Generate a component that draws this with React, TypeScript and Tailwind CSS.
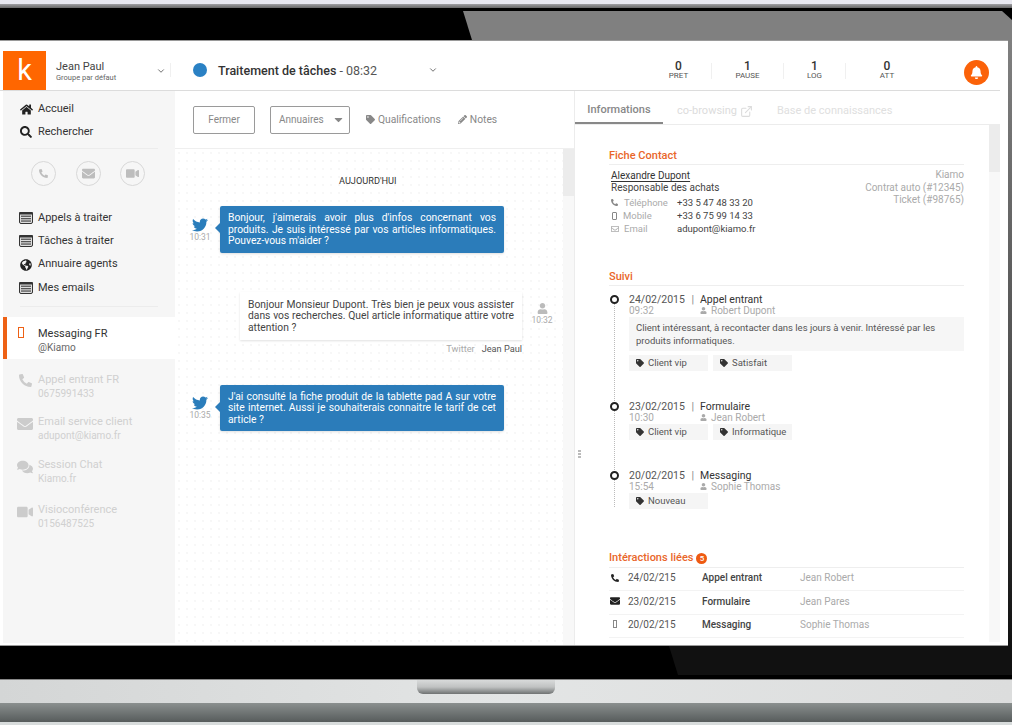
import React from "react";
import {
  FaHome, FaSearch, FaPhoneAlt, FaEnvelope, FaVideo, FaGlobeAmericas, FaTwitter, FaUser, FaTag,
  FaPencilAlt, FaBell, FaComments, FaCaretDown, FaRegEnvelope,
} from "react-icons/fa";
import { ChevronDown, ExternalLink } from "lucide-react";

function ListIcon() {
  return (
    <svg width="14" height="12" viewBox="0 0 14 12" className="text-[#333]">
      <rect x="0.5" y="0.5" width="13" height="11" rx="1.5" fill="#ddd" stroke="currentColor" />
      <rect x="0" y="0" width="14" height="2.5" rx="1" fill="currentColor" />
      <rect x="2" y="3.6" width="10" height="1.3" fill="#555" />
      <rect x="2" y="6" width="10" height="1.3" fill="#555" />
      <rect x="2" y="8.4" width="10" height="1.3" fill="#555" />
    </svg>
  );
}

function Tofu({ className }: { className: string }) {
  return <span className={"inline-block border " + className} />;
}

function NavItem({ icon, label, mt }: { icon: React.ReactNode; label: string; mt: string }) {
  return (
    <div className={"flex h-[14px] items-center pl-[14px] " + mt}>
      <span className="flex w-[18px] justify-center text-[#222]">{icon}</span>
      <span className="ml-[3px] text-[11px] text-[#333]">{label}</span>
    </div>
  );
}

function Channel({ icon, title, sub, mt }: { icon: React.ReactNode; title: string; sub: string; mt: string }) {
  return (
    <div className={"flex h-[28px] pl-[12px] text-[#d0d0d0] " + mt}>
      <span className="mt-[1px] flex w-[20px] justify-center text-[#cccccc]">{icon}</span>
      <div className="ml-[3px] text-[10.5px] leading-[14px]">
        <div className="text-[11px]">{title}</div>
        <div className="text-[10px]">{sub}</div>
      </div>
    </div>
  );
}

function Stat({ n, label, w, border }: { n: string; label: string; w: string; border?: boolean }) {
  return (
    <div className={"flex h-[16px] flex-col items-center justify-center " + w + (border ? " border-r border-[#f0f0f0]" : "")}>
      <span className="text-[12px] font-medium leading-[10px] text-[#333]">{n}</span>
      <span className="text-[8px] leading-[10px] text-[#555]">{label}</span>
    </div>
  );
}

function Bubble({ time, children, mt }: { time: string; children: React.ReactNode; mt: string }) {
  return (
    <div className={"flex items-center pl-[14px] " + mt}>
      <div className="flex w-[22px] flex-col items-center">
        <FaTwitter className="text-[16px] text-[#2a7dbb]" />
        <span className="text-[8.5px] leading-[9px] text-[#aaa]">{time}</span>
      </div>
      <div className="relative ml-[9px] w-[284px] rounded-[2px] bg-[#2b7cba] px-[8px] py-[6px] text-justify text-[10.3px] leading-[11.6px] text-white shadow-sm">
        <span className="absolute top-[17px] -left-[5px] h-0 w-0 border-y-[5px] border-r-[5px] border-y-transparent border-r-[#2b7cba]" />
        {children}
      </div>
    </div>
  );
}

function Tag({ label, w }: { label: string; w: string }) {
  return (
    <div className={"flex h-[16px] items-center bg-[#f5f5f5] pl-[7px] text-[9.5px] text-[#555] " + w}>
      <FaTag className="mr-[4px] text-[8px] text-[#333]" />
      {label}
    </div>
  );
}

function Follow({ date, time, type, who, children, h }: { date: string; time: string; type: string; who: string; children: React.ReactNode; h: string }) {
  return (
    <div className={"flex " + h}>
      <div className="mr-[9px] flex w-[11px] flex-col items-center pt-[1px]">
        <span className="h-[9px] w-[9px] shrink-0 rounded-full border-2 border-[#222]" />
        <span className="w-0 flex-1 border-l border-dotted border-[#bbb]" />
      </div>
      <div className="flex-1">
        <div className="flex h-[11px] items-center text-[10.5px]">
          <span className="w-[71px] text-[#555]">{date} <span className="ml-[4px] text-[#888]">|</span></span>
          <span className="text-[#333]">{type}</span>
        </div>
        <div className="flex h-[10px] items-center text-[10px] text-[#aaa]">
          <span className="w-[71px]">{time}</span>
          <FaUser className="mr-[4px] text-[7px]" />
          <span>{who}</span>
        </div>
        {children}
      </div>
    </div>
  );
}

function LinkRow({ icon, date, type, who }: { icon: React.ReactNode; date: string; type: string; who: string }) {
  return (
    <div className="flex h-[23.4px] items-center border-b border-[#f3f3f3] pb-[3px] text-[10px]">
      <span className="mr-[8px] flex w-[11px] justify-center text-[#222]">{icon}</span>
      <span className="w-[74px] text-[#555]">{date}</span>
      <span className="w-[98px] font-medium text-[#444]">{type}</span>
      <span className="text-[#aaa]">{who}</span>
    </div>
  );
}

export default function App() {
  return (
    <div className="flex h-[725px] w-[1012px] flex-col overflow-hidden bg-black font-['Roboto',sans-serif]">
      <div className="h-[4px] shrink-0 bg-[#e7e7ef]" />
      <div className="h-[4px] shrink-0 bg-gradient-to-b from-[#a0a0a4] to-[#666]" />
      <div className="relative h-[32px] shrink-0 bg-black">
        <div className="absolute inset-0 bg-[#808080] [clip-path:polygon(463px_3px,1002px_3px,1012px_12px,1012px_32px,472px_32px)]" />
      </div>

      <div className="flex h-[606px] shrink-0">
        <div className="flex w-[1008px] flex-col border-y border-[#9a9a9a] bg-white">
          {/* header */}
          <div className="mr-[8px] flex h-[50px] shrink-0 items-end border-b border-[#dcdcdc]">
            <div className="ml-[3px] flex h-[39px] w-[43px] items-center justify-center bg-[#ff6600] text-[29px] leading-none text-white">k</div>
            <div className="ml-[10px] flex w-[100px] flex-col self-center pt-[11px]">
              <span className="text-[11px] leading-[13px] text-[#444]">Jean Paul</span>
              <span className="text-[7.5px] leading-[10px] text-[#666]">Groupe par défaut</span>
            </div>
            <ChevronDown className="mb-[14px] h-[10px] w-[10px] text-[#555]" strokeWidth={2} />
            <span className="mb-[13px] ml-[4px] h-[14px] w-0 border-l border-[#f0f0f0]" />
            <span className="mb-[13px] ml-[22px] h-[14px] w-[14px] rounded-full bg-[#2a81c4]" />
            <div className="mb-[12px] ml-[11px] w-[210px] text-[12.5px] leading-[15px] text-[#555]">
              <span className="font-medium text-[#333]">Traitement de tâches</span> - 08:32
            </div>
            <ChevronDown className="mb-[15px] h-[10px] w-[10px] text-[#555]" strokeWidth={2} />
            <div className="mb-[11px] ml-[208px] flex items-center">
              <Stat n="0" label="PRET" w="w-[66px]" border />
              <Stat n="1" label="PAUSE" w="w-[72px]" border />
              <Stat n="1" label="LOG" w="w-[62px]" border />
              <Stat n="0" label="ATT" w="w-[82px]" />
            </div>
            <span className="mb-[5px] ml-[36px] flex h-[25px] w-[25px] items-center justify-center rounded-full bg-[#fb6209] text-white">
              <FaBell className="text-[13px]" />
            </span>
          </div>

          <div className="flex min-h-0 flex-1">
            {/* sidebar */}
            <aside className="mb-[2px] ml-[3px] w-[172px] shrink-0 bg-[#f6f6f6]">
              <NavItem icon={<FaHome className="text-[13px]" />} label="Accueil" mt="mt-[11px]" />
              <NavItem icon={<FaSearch className="text-[12px]" />} label="Rechercher" mt="mt-[9px]" />
              <div className="mx-[17px] mt-[9px] border-t border-[#ececec]" />
              <div className="mt-[12px] flex gap-[19.5px] pl-[28px]">
                {[<FaPhoneAlt key="a" className="text-[9px]" />, <FaEnvelope key="b" className="text-[13px]" />, <FaVideo key="c" className="text-[13px]" />].map((ic, i) => (
                  <span key={i} className="flex h-[25px] w-[25px] items-center justify-center rounded-full border border-[#d8d8d8] text-[#bdbdbd]">{ic}</span>
                ))}
              </div>
              <NavItem icon={<ListIcon />} label="Appels à traiter" mt="mt-[25px]" />
              <NavItem icon={<ListIcon />} label="Tâches à traiter" mt="mt-[9.3px]" />
              <NavItem icon={<FaGlobeAmericas className="text-[12px]" />} label="Annuaire agents" mt="mt-[9.3px]" />
              <NavItem icon={<ListIcon />} label="Mes emails" mt="mt-[9.3px]" />
              <div className="mx-[17px] mt-[11px] border-t border-[#ececec]" />
              <div className="mt-[10px] flex h-[42px] border-l-[4px] border-[#ee6115] bg-white pt-[10px]">
                <Tofu className="ml-[11px] h-[11px] w-[6px] border-[#ee6115]" />
                <div className="ml-[14px] text-[11px] leading-[14px] text-[#333]">
                  <div>Messaging FR</div>
                  <div className="text-[10px] text-[#666]">@Kiamo</div>
                </div>
              </div>
              <Channel icon={<FaPhoneAlt className="text-[13px]" />} title="Appel entrant FR" sub="0675991433" mt="mt-[14px]" />
              <Channel icon={<FaEnvelope className="text-[16px]" />} title="Email service client" sub="adupont@kiamo.fr" mt="mt-[14px]" />
              <Channel icon={<FaComments className="text-[16px]" />} title="Session Chat" sub="Kiamo.fr" mt="mt-[15px]" />
              <Channel icon={<FaVideo className="text-[16px]" />} title="Visioconférence" sub="0156487525" mt="mt-[17px]" />
            </aside>

            {/* conversation */}
            <main className="flex w-[399px] shrink-0 flex-col">
              <div className="flex h-[58px] shrink-0 items-center border-b border-[#efefef] pl-[18px]">
                <button className="h-[28px] w-[62px] rounded-[2px] border border-[#9a9a9a] pb-[1px] text-[10px] text-[#888]">Fermer</button>
                <button className="ml-[15px] flex h-[28px] w-[80px] items-center rounded-[2px] border border-[#9a9a9a] pl-[8px] text-[10px] text-[#888]">
                  Annuaires
                  <FaCaretDown className="ml-[8px] text-[13px] text-[#888]" />
                </button>
                <FaTag className="ml-[16px] text-[9px] text-[#888]" />
                <span className="ml-[3px] text-[10.3px] text-[#888]">Qualifications</span>
                <FaPencilAlt className="ml-[17px] text-[9px] text-[#888]" />
                <span className="ml-[3px] text-[10.3px] text-[#888]">Notes</span>
              </div>
              <div className="flex min-h-0 flex-1">
                <div className="w-[388px] bg-[radial-gradient(#f7f7f7_0.7px,transparent_0.9px)] bg-[length:8px_8px]">
                  <div className="mt-[27px] pl-[164px] text-[9.2px] leading-[10px] text-[#333]">AUJOURD'HUI</div>
                  <Bubble time="10:31" mt="mt-[20px]">
                    Bonjour, j'aimerais avoir plus d'infos concernant vos produits. Je suis intéressé par vos articles informatiques. Pouvez-vous m'aider ?
                  </Bubble>
                  <div className="mt-[39px] flex items-start pl-[65px]">
                    <div className="relative w-[282px] bg-white px-[8px] pt-[7px] pb-[6px] text-justify text-[10.3px] leading-[11.6px] text-[#444] shadow-[0_1px_2px_rgba(0,0,0,0.12)]">
                      Bonjour Monsieur Dupont. Très bien je peux vous assister dans vos recherches. Quel article informatique attire votre attention ?
                    </div>
                    <div className="ml-[9px] flex w-[22px] flex-col items-center pt-[11px] text-[#bbb]">
                      <FaUser className="text-[11px]" />
                      <span className="text-[8.5px] leading-[13px] text-[#aaa]">10:32</span>
                    </div>
                  </div>
                  <div className="mt-[3px] flex w-[347px] justify-end text-[9.2px] leading-[11px]">
                    <span className="mr-[7px] text-[#aaa]">Twitter</span>
                    <span className="text-[#555]">Jean Paul</span>
                  </div>
                  <Bubble time="10:35" mt="mt-[31px]">
                    J'ai consulté la fiche produit de la tablette pad A sur votre site internet. Aussi je souhaiterais connaitre le tarif de cet article ?
                  </Bubble>
                </div>
                <div className="w-[11px] bg-[#f8f8f8]">
                  <div className="h-[47px] bg-[#ececec]" />
                </div>
              </div>
            </main>

            {/* details */}
            <section className="relative mr-[8px] flex min-w-0 flex-1 flex-col border-l border-[#ececec]">
              <span className="absolute top-[359px] left-[3px] flex flex-col gap-[1px]">
                <span className="h-[2px] w-[3px] bg-[#bbb]" />
                <span className="h-[2px] w-[3px] bg-[#bbb]" />
                <span className="h-[2px] w-[3px] bg-[#bbb]" />
              </span>
              <div className="flex h-[34px] shrink-0 items-stretch border-b border-[#ececec] text-[11px]">
                <div className="flex w-[88px] items-center justify-center border-b-[2px] border-[#888] pt-[8px] font-medium text-[#888]">Informations</div>
                <div className="ml-[14px] flex items-center pt-[8px] text-[#dcdcdc]">co-browsing<ExternalLink className="ml-[3px] h-[13px] w-[13px]" /></div>
                <div className="ml-[24px] flex items-center pt-[8px] text-[#e0e0e0]">Base de connaissances</div>
              </div>
              <div className="flex min-h-0 flex-1">
                <div className="w-[415px] pl-[34px] pr-[25px]">
                  <div className="mt-[24px] h-[16px] border-b border-[#eee] text-[11px] font-medium leading-[13px] text-[#e9662a]">Fiche Contact</div>
                  <div className="flex justify-between">
                    <div className="pl-[2px]">
                      <div className="mt-[5px] text-[10px] leading-[11px] text-[#333] underline underline-offset-2">Alexandre Dupont</div>
                      <div className="text-[10px] leading-[13px] text-[#444]">Responsable des achats</div>
                      <div className="mt-[2px] grid grid-cols-[66px_1fr] text-[9.5px] leading-[13px]">
                        <span className="flex items-center text-[#aaa]"><FaPhoneAlt className="mr-[6px] w-[7px] text-[7px] text-[#888]" />Téléphone</span><span className="text-[#444]">+33 5 47 48 33 20</span>
                        <span className="flex items-center text-[#aaa]"><Tofu className="mr-[6px] ml-[1px] h-[8px] w-[5px] rounded-[1px] border-[#888]" />Mobile</span><span className="text-[#444]">+33 6 75 99 14 33</span>
                        <span className="flex items-center text-[#aaa]"><FaRegEnvelope className="mr-[5px] text-[8px] text-[#aaa]" />Email</span><span className="text-[#444]">adupont@kiamo.fr</span>
                      </div>
                    </div>
                    <div className="mt-[4px] text-right text-[10px] leading-[12.5px] text-[#aaa]">
                      <div>Kiamo</div>
                      <div>Contrat auto (#12345)</div>
                      <div>Ticket (#98765)</div>
                    </div>
                  </div>

                  <div className="mt-[35px] h-[16px] border-b border-[#eee] text-[11px] font-medium leading-[13px] text-[#e9662a]">Suivi</div>
                  <div className="mt-[8px]">
                    <Follow date="24/02/2015" time="09:32" type="Appel entrant" who="Robert Dupont" h="h-[107px]">
                      <div className="mt-[2px] w-[335px] bg-[#f6f6f6] py-[4px] pl-[7px] text-[9.5px] leading-[13px] text-[#555]">
                        Client intéressant, à recontacter dans les jours à venir. Intéressé par les produits informatiques.
                      </div>
                      <div className="mt-[4px] flex gap-[5px]"><Tag label="Client vip" w="w-[79px]" /><Tag label="Satisfait" w="w-[79px]" /></div>
                    </Follow>
                    <Follow date="23/02/2015" time="10:30" type="Formulaire" who="Jean Robert" h="h-[69px]">
                      <div className="mt-[2px] flex gap-[5px]"><Tag label="Client vip" w="w-[79px]" /><Tag label="Informatique" w="w-[79px]" /></div>
                    </Follow>
                    <Follow date="20/02/2015" time="15:54" type="Messaging" who="Sophie Thomas" h="h-[37px]">
                      <div className="mt-[2px]"><Tag label="Nouveau" w="w-[79px]" /></div>
                    </Follow>
                  </div>

                  <div className="mt-[44px] flex h-[17px] items-start border-b border-[#eee] text-[11px] font-medium leading-[14px] text-[#e9662a]">
                    Intéractions liées
                    <span className="ml-[3px] mt-[2px] flex h-[11px] w-[11px] items-center justify-center rounded-full bg-[#ee5a12] text-[8px] text-white">5</span>
                  </div>
                  <LinkRow icon={<FaPhoneAlt className="text-[8px]" />} date="24/02/215" type="Appel entrant" who="Jean Robert" />
                  <LinkRow icon={<FaEnvelope className="text-[10px]" />} date="23/02/215" type="Formulaire" who="Jean Pares" />
                  <LinkRow icon={<Tofu className="h-[8px] w-[4px] border-[#888]" />} date="20/02/215" type="Messaging" who="Sophie Thomas" />
                </div>
                <div className="mb-[3px] w-[11px] bg-[#f8f8f8]">
                  <div className="h-[47px] bg-[#ececec]" />
                </div>
              </div>
            </section>
          </div>
        </div>
        <div className="w-[4px] bg-gradient-to-b from-[#808080] via-[#555] to-[#111]" />
      </div>

      <div className="relative h-[33px] shrink-0 bg-black">
        <div className="absolute inset-0 bg-[#111] [clip-path:polygon(669px_0,1012px_0,1012px_29px,678px_29px)]" />
      </div>
      <div className="h-[24px] shrink-0 border-t border-[#888] bg-gradient-to-r from-[#d4d6d6] via-[#e3e5e5] to-[#dcdddd]">
        <div className="ml-[417px] h-[14px] w-[138px] rounded-b-[6px] bg-gradient-to-b from-[#d8dada] via-[#c0c2c2] to-[#6f7272]" />
      </div>
      <div className="h-[19px] shrink-0 bg-gradient-to-b from-[#8b908f] to-[#575c5c]" />
      <div className="h-[3px] shrink-0 bg-[#d8dcdc]" />
    </div>
  );
}
